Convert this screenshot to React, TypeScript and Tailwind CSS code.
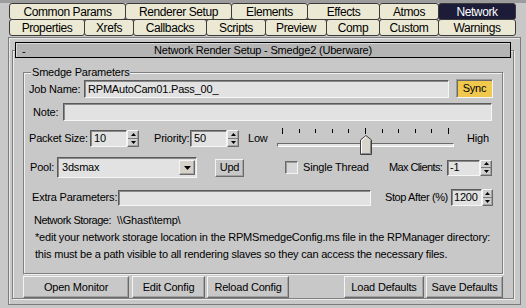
import React from "react";

const sunken =
  "bg-[#e2e2e2] border border-t-[#5a5a5a] border-l-[#5a5a5a] border-b-[#f6f6f6] border-r-[#f6f6f6] shadow-[inset_1px_1px_0_#8a8a8a]";
const raised =
  "border border-t-[#f4f4f4] border-l-[#f4f4f4] border-b-[#6a6a6a] border-r-[#6a6a6a] shadow-[inset_-1px_-1px_0_#a4a4a4]";

function Arrow({ up }: { up?: boolean }) {
  return (
    <svg width="5" height="3" viewBox="0 0 5 3" className="block">
      {up ? <polygon points="2.5,0 5,3 0,3" fill="#000" /> : <polygon points="0,0 5,0 2.5,3" fill="#000" />}
    </svg>
  );
}

function Spin({ w }: { w: number }) {
  return (
    <div
      className={`h-full shrink-0 flex flex-col bg-[#cfcfcf] ${raised} ${w === 12 ? "w-[12px]" : "w-[11px]"}`}
    >
      <div className="flex-1 flex items-center justify-center border-b border-b-[#7a7a7a]">
        <Arrow up />
      </div>
      <div className="flex-1 flex items-center justify-center">
        <Arrow />
      </div>
    </div>
  );
}

const row1: [string, string, boolean?][] = [
  ["Common Params", "w-[117px]"],
  ["Renderer Setup", "w-[107px]"],
  ["Elements", "w-[77px]"],
  ["Effects", "w-[73px]"],
  ["Atmos", "w-[60px]"],
  ["Network", "w-[78px]", true],
];
const row2: [string, string][] = [
  ["Properties", "w-[76px]"],
  ["Xrefs", "w-[50px]"],
  ["Callbacks", "w-[74px]"],
  ["Scripts", "w-[60px]"],
  ["Preview", "w-[62px]"],
  ["Comp", "w-[54px]"],
  ["Custom", "w-[60px]"],
  ["Warnings", "w-[78px]"],
];

function Btn({ label, cls }: { label: string; cls: string }) {
  return (
    <div className={`h-full shrink-0 flex items-center justify-center bg-[#c8c8c8] ${raised} ${cls}`}>{label}</div>
  );
}

export default function App() {
  return (
    <div className="w-[526px] h-[308px] overflow-hidden bg-[#c8c8c8] text-black text-[11px] tracking-[-0.2px] font-['Liberation_Sans',Arial,sans-serif] leading-none whitespace-nowrap">
      {/* top strip */}
      <div className="h-[3px] bg-[#9c9c9c]" />
      {/* tabs */}
      <div className="pl-[9px]">
        <div className="flex h-[17px]">
          {row1.map(([t, w, active], i) => (
            <div
              key={t}
              className={`${w} ${i > 0 ? "-ml-px" : ""} h-full flex items-center justify-center border border-[#3a3a3a] rounded-[3px] ${
                active ? "bg-[#1c1c38] text-white" : "bg-[#ebe9d4]"
              }`}
            >
              <span className="text-[12px] tracking-[-0.4px]">{t}</span>
            </div>
          ))}
        </div>
        <div className="flex h-[17px] -mt-px">
          {row2.map(([t, w], i) => (
            <div
              key={t}
              className={`${w} ${i > 0 ? "-ml-px" : ""} h-full flex items-center justify-center border border-[#3a3a3a] rounded-[3px] bg-[#ebe9d4]`}
            >
              <span className="text-[12px] tracking-[-0.4px]">{t}</span>
            </div>
          ))}
        </div>
      </div>

      {/* outer panel */}
      <div className="ml-[8px] mt-[1px] w-[513px] h-[268px] border border-[#7c7c7c] shadow-[inset_1px_1px_0_#e8e8e8] pl-[3px] pt-[12px]">
        {/* rollout frame */}
        <div className="w-[502px] h-[249px] border border-[#808080] shadow-[1px_1px_0_#ececec,inset_1px_1px_0_#ececec]">
          {/* header */}
          <div className="-mt-[9px] mx-[2px] h-[16px] bg-[#b4b4b4] border border-black shadow-[inset_1px_1px_0_#d8d8d8] flex items-center relative">
            <span className="absolute left-[6px] top-[3px]">-</span>
            <span className="flex-1 text-center">Network Render Setup - Smedge2 (Uberware)</span>
          </div>

          {/* group box */}
          <div className="relative mt-[14px] ml-[10px] w-[480px] h-[202px] border border-[#808080] shadow-[1px_1px_0_#f0f0f0,inset_1px_1px_0_#f0f0f0]">
            <span className="absolute -top-[6px] left-[7px] px-[1px] bg-[#c8c8c8]">Smedge Parameters</span>

            {/* Job name */}
            <div className="mt-[6px] h-[19px] flex pl-[5px]">
              <span className="w-[55px] shrink-0 self-center pt-[2px]">Job Name:</span>
              <div className={`w-[365px] shrink-0 h-[18px] mt-[1px] flex items-center pl-[3px] ${sunken}`}>
                RPMAutoCam01.Pass_00_
              </div>
              <div className="ml-[7px] w-[37px] shrink-0 h-[19px] flex items-center justify-center bg-[#f1c84e] border border-t-[#9a9a9a] border-l-[#9a9a9a] border-b-[#f6f6f6] border-r-[#f6f6f6] shadow-[inset_1px_1px_0_#6a6a6a]">
                Sync
              </div>
            </div>

            {/* Note */}
            <div className="mt-[5px] h-[18px] flex items-center pl-[9px]">
              <span className="w-[30px] shrink-0">Note:</span>
              <div className={`w-[429px] shrink-0 h-[18px] ${sunken}`} />
            </div>

            {/* Packet / priority / slider */}
            <div className="mt-[9px] h-[17px] flex items-center pl-[5px]">
              <span className="w-[61px] shrink-0">Packet Size:</span>
              <div className={`w-[37px] shrink-0 h-full flex items-center pl-[3px] ${sunken}`}>10</div>
              <Spin w={12} />
              <span className="ml-[15px] w-[36px] shrink-0">Priority:</span>
              <div className={`w-[37px] shrink-0 h-full flex items-center pl-[3px] ${sunken}`}>50</div>
              <Spin w={12} />
              <span className="ml-[9px] w-[29px] shrink-0">Low</span>
              <div className="relative w-[177px] shrink-0 h-full">
                <div className="absolute -top-[2px] left-0 right-0 h-[6px] flex justify-between px-[5px] items-start">
                  {[0, 1, 2, 3, 4, 5, 6, 7, 8, 9, 10].map((i) => (
                    <div
                      key={i}
                      className={`w-px bg-black ${i === 0 || i === 5 || i === 10 ? "h-[6px]" : "h-[4px] mt-[1px]"}`}
                    />
                  ))}
                </div>
                <div className="absolute top-[13px] left-0 right-0 h-[4px] border border-t-[#6a6a6a] border-l-[#6a6a6a] border-b-white border-r-white bg-[#e4e4e4]" />
                <svg className="absolute top-[5px] left-[83px]" width="12" height="20" viewBox="0 0 12 20">
                  <polygon points="0.5,5 6,0.5 11.5,5 11.5,19.5 0.5,19.5" fill="#d8d4cc" stroke="#404040" />
                  <polyline points="1.5,18.5 1.5,5.5 6,1.8" fill="none" stroke="#ffffff" />
                  <polyline points="10.5,5.5 10.5,18.5 1.5,18.5" fill="none" stroke="#8a8a8a" />
                </svg>
              </div>
              <span className="ml-[13px]">High</span>
            </div>

            {/* Pool row */}
            <div className="mt-[10px] h-[21px] flex items-center pl-[6px]">
              <span className="w-[27px] shrink-0">Pool:</span>
              <div className={`w-[140px] shrink-0 h-full flex items-center pl-[4px] relative ${sunken}`}>
                3dsmax
                <div className={`absolute right-[1px] top-[2px] w-[16px] h-[15px] flex items-center justify-center bg-[#d6d2ca] ${raised}`}>
                  <svg width="7" height="4" viewBox="0 0 7 4">
                    <polygon points="0,0 7,0 3.5,4" fill="#000" />
                  </svg>
                </div>
              </div>
              <div className={`ml-[18px] w-[29px] shrink-0 h-[18px] flex items-center justify-center ${raised}`}>Upd</div>
              <div className="ml-[41px] w-[13px] shrink-0 h-[13px] bg-[#d6d6d6] border border-t-[#6a6a6a] border-l-[#6a6a6a] border-b-[#f4f4f4] border-r-[#f4f4f4] shadow-[inset_1px_1px_0_#9a9a9a]" />
              <span className="ml-[5px] w-[86px] shrink-0">Single Thread</span>
              <span className="w-[58px] shrink-0 tracking-[-0.6px]">Max Clients:</span>
              <div className={`w-[33px] shrink-0 h-[16px] flex items-center pl-[2px] ${sunken}`}>-1</div>
              <div className="h-[16px] shrink-0">
                <Spin w={12} />
              </div>
            </div>

            {/* Extra row */}
            <div className="mt-[11px] h-[17px] flex items-center pl-[8px]">
              <span className="w-[86px] shrink-0">Extra Parameters:</span>
              <div className={`w-[253px] shrink-0 h-[16px] ${sunken}`} />
              <span className="ml-[14px] w-[66px] shrink-0 tracking-[-0.4px]">Stop After (%)</span>
              <div className={`w-[31px] shrink-0 h-full flex items-center pl-[2px] ${sunken}`}>1200</div>
              <Spin w={11} />
            </div>

            {/* Storage text */}
            <div className="mt-[6px] leading-[17px] pl-[10px]">
              <div className="flex">
                <span className="w-[83px] shrink-0 tracking-[-0.5px]">Network Storage:</span>
                <span>\\Ghast\temp\</span>
              </div>
              <div className="pl-px">
                *edit your network storage location in the RPMSmedgeConfig.ms file in the RPManager directory:
              </div>
              <div className="pl-px">this must be a path visible to all rendering slaves so they can access the necessary files.</div>
            </div>
          </div>

          {/* buttons */}
          <div className="mt-[2px] ml-[10px] w-[480px] h-[22px] flex">
            <Btn label="Open Monitor" cls="w-[106px]" />
            <Btn label="Edit Config" cls="w-[73px] ml-[3px]" />
            <Btn label="Reload Config" cls="w-[82px] ml-[2px]" />
            <div className="flex-1" />
            <Btn label="Load Defaults" cls="w-[80px]" />
            <Btn label="Save Defaults" cls="w-[77px] ml-[2px]" />
          </div>
        </div>
      </div>
    </div>
  );
}
